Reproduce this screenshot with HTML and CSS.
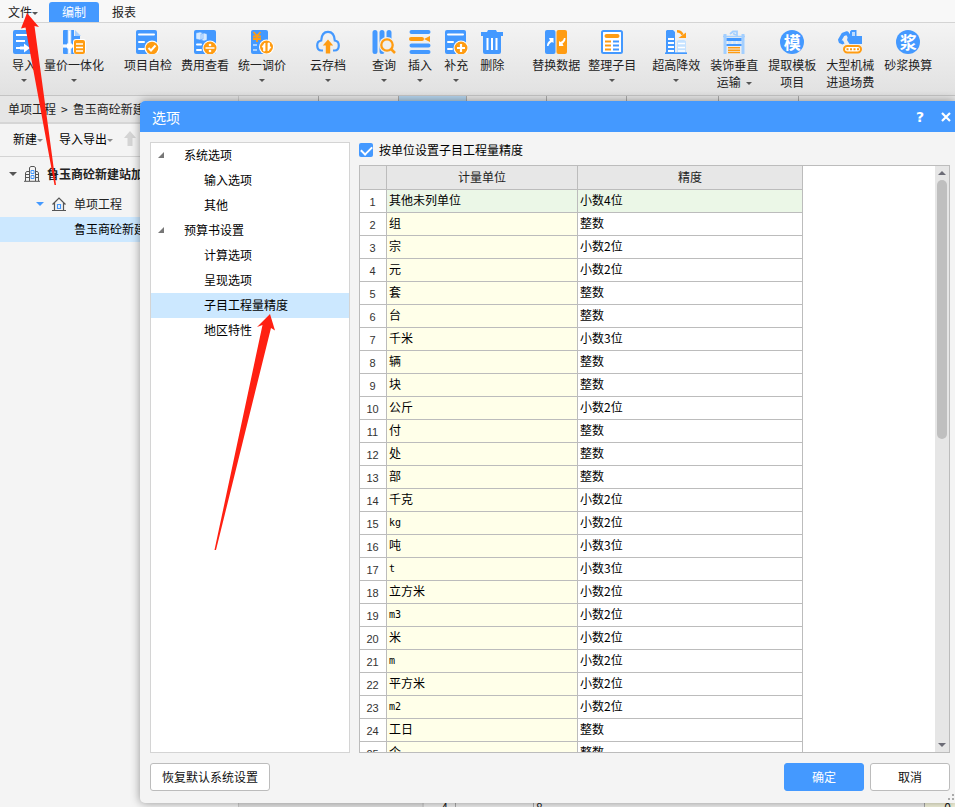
FILE: index.html
```html
<!DOCTYPE html>
<html lang="zh-CN">
<head>
<meta charset="utf-8">
<title>选项</title>
<link rel="stylesheet" href="styles.css">
</head>
<body>
<div class="app">
  <nav class="menubar">
    <button class="menu-file">文件<i class="caret"></i></button>
    <button class="menu-tab active">编制</button>
    <button class="menu-tab">报表</button>
  </nav>

  <div class="ribbon">
    <div class="group">
      <button class="tool"><svg class="icon" viewBox="0 0 24 24"><rect x="1" width="22" height="24" rx="2" fill="#4499ff"/><path d="M4 5h15M4 11h9M4 18h6" stroke="#fff" stroke-width="2"/><path d="M8 16.500h4v-3l6 4.500-6 4.500v-3H8z" fill="#fff"/></svg><span>导入</span><i class="caret"></i></button>
      <button class="tool"><svg class="icon" viewBox="0 0 24 24"><path d="M2 0h10v6h6v18H2a1 1 0 0 1-1-1V1a1 1 0 0 1 1-1z" fill="#4499ff"/><path d="M7.500 0v24M1 16h11" stroke="#d5e9ff" stroke-width="3.500"/><path d="M7.500 1v22M1 16h10" stroke="#fff" stroke-width="1.500"/><path d="M5 13.500h5v5H5z" fill="#fff"/><path d="M13 0l6 6h-6z" fill="#a9d1ff"/><rect x="11" y="9" width="13" height="15" rx="3" fill="#fff"/><rect x="12" y="10" width="11" height="14" rx="2" fill="#ff9c12"/><path d="M14 14h7M14 17.500h7M14 21h7" stroke="#fff" stroke-width="1.500"/></svg><span>量价一体化</span><i class="caret"></i></button>
    </div>
    <div class="group group-check">
      <button class="tool"><svg class="icon" viewBox="0 0 24 24"><rect x="0" width="21" height="24" rx="2" fill="#4499ff"/><path d="M3 4.500h15M3 12h5M3 19h5" stroke="#fff" stroke-width="2" stroke-linecap="round"/><circle cx="16" cy="18" r="7.500" fill="#fff"/><circle cx="16" cy="18" r="6.300" fill="#ff9c12"/><path d="M12.500 18l2.500 2.500 4.500-5" stroke="#fff" stroke-width="2" fill="none"/></svg><span>项目自检</span></button>
      <button class="tool"><svg class="icon" viewBox="0 0 24 24"><rect x="1" width="22" height="24" rx="2" fill="#4499ff"/><path d="M3 3l4-1 3 1v6l-3 1-4-1zM8 4l3-1 3 1v6l-3 1-3-1z" fill="#d5e9ff" stroke="#4499ff" stroke-width=".5"/><path d="M4 14.500h4M4 20h4" stroke="#fff" stroke-width="2" stroke-linecap="round"/><circle cx="17" cy="18" r="7.500" fill="#fff"/><circle cx="17" cy="18" r="6.500" fill="#ff9c12"/><path d="M12.500 18h9" stroke="#fff" stroke-width="1.500"/><circle cx="17" cy="15" r="1.300" fill="#fff"/><circle cx="17" cy="21" r="1.300" fill="#fff"/></svg><span>费用查看</span></button>
      <button class="tool"><svg class="icon" viewBox="0 0 24 24"><rect x="1" width="17" height="24" rx="2" fill="#4499ff"/><path d="M3.500 2L7 6l3.500-4M3 6.500h8M3 9h8M7 6v6" stroke="#ff9c12" stroke-width="1.800" fill="none"/><path d="M3 15h4M3 20h4" stroke="#a9d1ff" stroke-width="2"/><circle cx="16.500" cy="17" r="7.500" fill="#fff"/><circle cx="16.500" cy="17" r="6.500" fill="#ff9c12"/><path d="M15 13v8h-1.500v-4H12zM18 21v-8h1.500v4H21z" fill="#fff" stroke="#fff" stroke-width=".8"/></svg><span>统一调价</span><i class="caret"></i></button>
    </div>
    <div class="group group-cloud">
      <button class="tool"><svg class="icon" viewBox="0 0 24 24"><path d="M7 20.500H5.500C2.500 20.500 1.200 18 1.200 15.500c0-3 1.800-4.700 4-5C5.500 5 8 1.800 12 1.800s6.500 3.200 6.800 8.700c2.200.3 4 2 4 5 0 2.500-1.300 5-4.300 5H17" fill="none" stroke="#4499ff" stroke-width="2.200"/><path d="M12 9.500l5.200 6h-3v8H9.800v-8h-3z" fill="#ff9c12"/></svg><span>云存档</span><i class="caret"></i></button>
    </div>
    <div class="group group-edit">
      <button class="tool"><svg class="icon" viewBox="0 0 24 24"><path d="M3 2.500v19M10 2.500v19M17 2.500v8" stroke="#4499ff" stroke-width="5" stroke-linecap="round"/><circle cx="15" cy="15" r="8" fill="#eee"/><circle cx="15" cy="15" r="5.700" fill="none" stroke="#ff9c12" stroke-width="2.300"/><path d="M19 19l4 4" stroke="#ff9c12" stroke-width="2.500"/></svg><span>查询</span><i class="caret"></i></button>
      <button class="tool"><svg class="icon" viewBox="0 0 24 24"><path d="M3.500 2h17M3.500 15.500h17M3.500 22h17" stroke="#4499ff" stroke-width="4" stroke-linecap="round"/><path d="M3 9h11" stroke="#ff9c12" stroke-width="4" stroke-linecap="round"/><path d="M22 6v6l-6-3z" fill="#ff9c12"/></svg><span>插入</span><i class="caret"></i></button>
      <button class="tool"><svg class="icon" viewBox="0 0 24 24"><rect x="1" width="21" height="24" rx="2" fill="#4499ff"/><path d="M4 4.500h15M4 12h5M4 19h4" stroke="#fff" stroke-width="2" stroke-linecap="round"/><circle cx="17" cy="18" r="7.500" fill="#fff"/><circle cx="17" cy="18" r="6.500" fill="#ff9c12"/><path d="M17 14v8M13 18h8" stroke="#fff" stroke-width="2.200"/></svg><span>补充</span><i class="caret"></i></button>
      <button class="tool"><svg class="icon" viewBox="0 0 24 24"><path d="M1 2h6l1-2h8l1 2h6v4h-2v16a2 2 0 0 1-2 2H5a2 2 0 0 1-2-2V6H1z" fill="#4499ff"/><path d="M7.500 8v12M12 8v12M16.500 8v12" stroke="#fff" stroke-width="2"/></svg><span>删除</span></button>
    </div>
    <div class="group group-data">
      <button class="tool"><svg class="icon" viewBox="0 0 24 24"><rect x="1" width="10.500" height="24" rx="2" fill="#4499ff"/><rect x="12.500" width="10.500" height="24" rx="2" fill="#ff9c12"/><path d="M3 16c0-3 1-4 3-5.500L5 8h4.500v5L8 12c-2 1-3 2-3.500 4z" fill="#fff"/><path d="M21.500 8c0 3-1 4-3 5.500l1 2.500H15v-5l1.500 1c2-1 3-2 3.500-4z" fill="#fff"/></svg><span>替换数据</span></button>
      <button class="tool"><svg class="icon" viewBox="0 0 24 24"><rect x="2" y="1" width="20" height="22" rx="1.500" fill="#fff" stroke="#4499ff" stroke-width="2"/><path d="M6.500 6h11" stroke="#ff9c12" stroke-width="4" stroke-linecap="round"/><path d="M5 11.500h6M5 15.500h6M5 19.500h6" stroke="#ff9c12" stroke-width="2"/><path d="M13 11.500h6M13 15.500h6M13 19.500h6" stroke="#4499ff" stroke-width="2"/></svg><span>整理子目</span><i class="caret"></i></button>
    </div>
    <div class="group group-project">
      <button class="tool"><svg class="icon" viewBox="0 0 24 24"><path d="M3 0h6l2 2v22H2V1z" fill="#4499ff"/><path d="M4 9h6M4 13h6M4 17h6M4 21h6" stroke="#fff" stroke-width="2"/><path d="M13 11l2-1h5l2 1v12h-9z" fill="#c5e2ff"/><path d="M14 13.500h7M14 17.500h7M14 21h7" stroke="#fff" stroke-width="1.500"/><path d="M1 23.200h22" stroke="#4499ff" stroke-width="1.600"/><path d="M13 1.200c3 0 4.500 1 5.500 3.500" fill="none" stroke="#ff9c12" stroke-width="2.400"/><path d="M14.500 8H22V2.500z" fill="#ff9c12"/></svg><span>超高降效</span><i class="caret"></i></button>
      <button class="tool"><svg class="icon" viewBox="0 0 24 24"><path d="M3 4v20M21 4v20" stroke="#a3cfff" stroke-width="3"/><path d="M8 4l3-2.500h4V6M11 3.500l3 1.500" fill="none" stroke="#a3cfff" stroke-width="1.800"/><path d="M1 6.500h22" stroke="#a3cfff" stroke-width="1.500"/><path d="M4.500 8h15v3h-15zM4.500 14h15v2h-15z" fill="#4499ff"/><path d="M6 11h3.500v3H6zM11 11h3v3h-3zM15.500 11H19v3h-3.500z" fill="#cfe6ff"/><path d="M6 17.800h12M6 20.200h12M6 22.600h12" stroke="#ff9c12" stroke-width="1.500"/></svg><span>装饰垂直</span><span>运输<i class="caret caret-inline"></i></span></button>
      <button class="tool"><b class="icon badge">模</b><span>提取模板</span><span>项目</span></button>
      <button class="tool"><svg class="icon" viewBox="0 0 24 24"><path d="M1.500 10.500L5 4.500l4-1.500 4 6" fill="none" stroke="#4499ff" stroke-width="3.500" stroke-linejoin="round"/><path d="M0 10l5 .5 1.500 3-2 1L1 13z" fill="#4499ff"/><path d="M10 6h2V1.500L13.500 0h5v6H24v8H11.500L9 10z" fill="#4499ff"/><path d="M14 2h3v4h-3z" fill="#bddcff"/><rect x="6" y="16" width="17" height="6.500" rx="3.200" fill="#fff" stroke="#ff9c12" stroke-width="2"/><path d="M8.500 19.300h12.500" stroke="#ff9c12" stroke-width="2" stroke-dasharray="2 1.500"/></svg><span>大型机械</span><span>进退场费</span></button>
      <button class="tool"><b class="icon badge">浆</b><span>砂浆换算</span></button>
    </div>
  </div>

  <div class="workspace">
    <aside class="sidebar">
      <div class="crumbs">单项工程<span class="sep">&gt;</span>鲁玉商砼新建</div>
      <div class="side-tools">
        <button>新建<i class="caret"></i></button>
        <button>导入导出<i class="caret"></i></button>
        <svg class="up" viewBox="0 0 12 16"><path d="M6 0l6 7H8.500v8h-5V7H0z" fill="#d4d4d4"/></svg>
      </div>
      <div class="project-tree">
        <div class="node root"><i class="twist"></i><svg class="node-icon" viewBox="0 0 16 16"><path d="M5.500 15V1.500L7 .5h3l1.500 1V15M5.500 5.500h-3L1.500 7v8M11.500 5.500h2l1 1.500v8M0 15.300h16M2 8.500h3M2 11.500h3M12 8.500h2M12 11.500h2" fill="none" stroke="#555"/><path d="M7 4.500h3v3H7zM7 9.500h3v3H7z" fill="none" stroke="#4499ff"/></svg><b>鲁玉商砼新建站加</b></div>
        <div class="node child"><i class="twist blue"></i><svg class="node-icon" viewBox="0 0 16 16"><path d="M1.500 8.500L8 2l6.500 6.500M3.500 7v7.500h9V7M1 14.500h14" fill="none" stroke="#555" stroke-width="1.200"/><path d="M6.500 8.500h3v4h-3z" fill="none" stroke="#4499ff" stroke-width="1.200"/></svg><span>单项工程</span></div>
        <div class="node leaf">鲁玉商砼新建</div>
      </div>
    </aside>
    <main class="sheet">
      <div class="sheet-tabs"><i></i><i></i><i class="current"></i><i></i><i></i><i class="wide"></i><i></i></div>
      <div class="sheet-foot"><i class="foot-gap"></i><span class="foot-num">4</span><span class="foot-cell"></span><span class="foot-rest">8</span><span class="foot-end">0</span></div>
    </main>
  </div>

  <section class="dialog" role="dialog" aria-labelledby="dialog-title">
    <header class="titlebar">
      <h1 id="dialog-title">选项</h1>
      <button class="help" aria-label="帮助">?</button>
      <button aria-label="关闭"><svg class="close" viewBox="0 0 10 10"><path d="M1 1l8 8M9 1L1 9" stroke="#fff" stroke-width="2.200"/></svg></button>
    </header>
    <div class="dialog-body">
      <ul class="options">
        <li class="parent"><i></i>系统选项</li>
        <li>输入选项</li>
        <li>其他</li>
        <li class="parent"><i></i>预算书设置</li>
        <li>计算选项</li>
        <li>呈现选项</li>
        <li class="selected">子目工程量精度</li>
        <li>地区特性</li>
      </ul>
      <div class="settings">
        <label class="check"><input type="checkbox" checked>按单位设置子目工程量精度</label>
        <div class="grid">
          <div class="grid-view">
            <table>
              <colgroup><col class="c-num"><col class="c-unit"><col class="c-prec"></colgroup>
              <thead><tr><th></th><th>计量单位</th><th>精度</th></tr></thead>
              <tbody>
                <tr class="current"><td>1</td><td>其他未列单位</td><td>小数4位</td></tr>
                <tr><td>2</td><td>组</td><td>整数</td></tr>
                <tr><td>3</td><td>宗</td><td>小数2位</td></tr>
                <tr><td>4</td><td>元</td><td>小数2位</td></tr>
                <tr><td>5</td><td>套</td><td>整数</td></tr>
                <tr><td>6</td><td>台</td><td>整数</td></tr>
                <tr><td>7</td><td>千米</td><td>小数3位</td></tr>
                <tr><td>8</td><td>辆</td><td>整数</td></tr>
                <tr><td>9</td><td>块</td><td>整数</td></tr>
                <tr><td>10</td><td>公斤</td><td>小数2位</td></tr>
                <tr><td>11</td><td>付</td><td>整数</td></tr>
                <tr><td>12</td><td>处</td><td>整数</td></tr>
                <tr><td>13</td><td>部</td><td>整数</td></tr>
                <tr><td>14</td><td>千克</td><td>小数2位</td></tr>
                <tr><td>15</td><td class="latin">kg</td><td>小数2位</td></tr>
                <tr><td>16</td><td>吨</td><td>小数3位</td></tr>
                <tr><td>17</td><td class="latin">t</td><td>小数3位</td></tr>
                <tr><td>18</td><td>立方米</td><td>小数2位</td></tr>
                <tr><td>19</td><td class="latin">m3</td><td>小数2位</td></tr>
                <tr><td>20</td><td>米</td><td>小数2位</td></tr>
                <tr><td>21</td><td class="latin">m</td><td>小数2位</td></tr>
                <tr><td>22</td><td>平方米</td><td>小数2位</td></tr>
                <tr><td>23</td><td class="latin">m2</td><td>小数2位</td></tr>
                <tr><td>24</td><td>工日</td><td>整数</td></tr>
                <tr><td>25</td><td>个</td><td>整数</td></tr>
              </tbody>
            </table>
          </div>
          <div class="scroll"><i class="arrow-up"></i><div class="thumb"></div><i class="arrow-down"></i></div>
        </div>
      </div>
    </div>
    <footer class="actions">
      <button class="btn reset">恢复默认系统设置</button>
      <button class="btn primary">确定</button>
      <button class="btn">取消</button>
    </footer>
    <svg class="grip" viewBox="0 0 6 6"><path d="M4 0h2v2H4zM0 4h2v2H0zM4 4h2v2H4z" fill="#aaa"/></svg>
  </section>

  <svg class="marks" width="300" height="560" viewBox="0 0 300 560" aria-hidden="true">
    <path d="M27 13L39 27 34.500 26 56 185H54.500L25.500 27.500 21 28.500zM270 314L275 330.500 271 328 216 550 214.500 550 262.500 325 257 327z" fill="#ff2012"/>
  </svg>
</div>
</body>
</html>
```
FILE: styles.css
```css
* { box-sizing: border-box; }
body {
  margin: 0;
  font: 12px/16px "Noto Sans CJK SC", sans-serif;
  color: #222;
  background: #f4f4f4;
}
button {
  font: inherit;
  color: inherit;
  background: none;
  border: 0;
  padding: 0;
  white-space: nowrap;
}
.app {
  position: relative;
  display: flex;
  flex-direction: column;
  height: 100vh;
  overflow: hidden;
}
.caret {
  display: inline-block;
  border: 3px solid transparent;
  border-top-color: #555;
  border-bottom: 0;
  vertical-align: middle;
}

/* Menu bar */
.menubar {
  display: flex;
  align-items: flex-end;
  height: 23px;
  background: #f8f8f8;
  border-bottom: 1px solid #d4d4d4;
}
.menu-file { width: 49px; height: 20px; padding-left: 8px; text-align: left; }
.menu-tab { width: 50px; height: 20px; border-radius: 3px 3px 0 0; }
.menu-tab.active { background: #4499ff; color: #fff; }

/* Ribbon */
.ribbon {
  display: flex;
  height: 73px;
  padding: 7px 0 0 12px;
  background: linear-gradient(#f4f4f4, #e1e1e1);
  border-bottom: 1px solid #c4c4c4;
}
.group { display: flex; gap: 8px; }
.group-check { margin-left: 20px; gap: 9px; }
.group-cloud { margin-left: 24px; }
.group-edit { margin-left: 26px; gap: 12px; }
.group-data { margin-left: 28px; }
.group-project { margin-left: 16px; gap: 10px; }
.tool { display: flex; flex-direction: column; align-items: center; }
.tool span { line-height: 17px; }
.tool .icon { width: 24px; height: 24px; margin-bottom: 2px; }
.tool > .caret { margin-top: 6px; }
.caret-inline { margin-left: 5px; }
.badge {
  border-radius: 50%;
  background: #4499ff;
  color: #fff;
  font-size: 17px;
  line-height: 23px;
  text-align: center;
}

/* Project sidebar */
.workspace { display: flex; flex: 1; min-height: 0; }
.sidebar { width: 239px; border-right: 1px solid #ccc; overflow: hidden; white-space: nowrap; }
.crumbs {
  height: 28px;
  padding-left: 8px;
  line-height: 26px;
  background: #e6e6e6;
  border-bottom: 2px solid #d6d6d6;
}
.sep { margin: 0 5px; }
.side-tools {
  display: flex;
  align-items: center;
  gap: 16px;
  height: 33px;
  padding: 0 0 2px 13px;
  border-bottom: 1px solid #d4d4d4;
}
.side-tools button { color: #000; }
.side-tools .caret { border-top-color: #888; }
.up { width: 12px; height: 16px; margin-left: -5px; }
.node { display: flex; align-items: center; }
.node-icon { width: 16px; height: 16px; }
.root { height: 34px; padding-left: 9px; gap: 7px; }
.child { height: 26px; padding-left: 36px; gap: 7px; }
.leaf { height: 25px; padding: 0 0 2px 74px; background: #cce8ff; color: #000; }
.twist { border: 4px solid transparent; border-top-color: #555; border-bottom: 0; }
.twist.blue { border-top-color: #4499ff; }

/* Sheet behind the dialog */
.sheet { display: flex; flex: 1; flex-direction: column; justify-content: space-between; overflow: hidden; }
.sheet-tabs { display: flex; height: 24px; background: #e6e6e6; }
.sheet-tabs i { width: 80px; border-right: 1px solid #aaa; }
.sheet-tabs .current { width: 68px; background: #b4d3ec; }
.sheet-tabs .wide { width: 92px; }
.sheet-foot { display: flex; height: 6px; line-height: 12px; overflow: hidden; background: #f0f0f0; }
.foot-gap { width: 185px; background: #e4e4e4; border-right: 2px solid #d4d4d4; }
.foot-num { width: 32px; padding-left: 10px; border-right: 1px solid #aaa; text-align: center; }
.foot-cell { width: 78px; border-right: 1px solid #aaa; }
.foot-rest { flex: 1; padding-left: 2px; border-right: 1px solid #aaa; }
.foot-end { width: 30px; padding-right: 4px; text-align: right; background: #f5f5dc; }

/* Options dialog */
.dialog {
  position: absolute;
  inset: 101px 0 4px 140px;
  display: flex;
  flex-direction: column;
  background: #f4f4f4;
  border-radius: 5px 0 0 5px;
  box-shadow: 0 0 10px rgba(0, 0, 0, .4);
}
.titlebar {
  display: flex;
  align-items: center;
  height: 31px;
  padding: 0 4px 0 12px;
  color: #fff;
  background: #4499ff;
  border-radius: 5px 0 0 0;
}
.titlebar h1 { flex: 1; margin: 0; font-size: 14px; font-weight: 400; line-height: 20px; }
.titlebar button { margin-left: 17px; }
.titlebar .help { font: 700 14px/16px "DejaVu Sans", sans-serif; }
.close { display: block; width: 10px; height: 10px; }
.dialog-body { display: flex; flex: 1; gap: 9px; min-height: 0; padding: 10px 5px 0 10px; }
.options {
  width: 200px;
  margin: 0;
  padding: 0;
  list-style: none;
  color: #000;
  background: #fff;
  border: 1px solid #d4d4d4;
}
.options li { height: 25px; padding-left: 53px; line-height: 23px; }
.options .parent { display: flex; align-items: center; gap: 20px; padding: 0 0 2px 7px; }
.options i { border: 3px solid #777; border-top-color: transparent; border-left-color: transparent; }
.options .selected { background: #cce8ff; }
.settings { display: flex; flex: 1; flex-direction: column; min-width: 0; }
.check { display: flex; align-items: center; gap: 6px; height: 16px; margin-bottom: 7px; color: #000; }
.check input {
  appearance: none;
  width: 14px;
  height: 14px;
  margin: 0;
  border-radius: 2px;
  background: #4499ff;
  display: grid;
  place-items: center;
}
.check input::before {
  content: "";
  width: 9px;
  height: 5px;
  border: solid #fff;
  border-width: 0 0 2px 2px;
  transform: translateY(-1px) rotate(-45deg);
}
.grid { display: flex; flex: 1; min-height: 0; background: #fff; border: 1px solid #bcbcbc; }
.grid-view { flex: 1; overflow: hidden; }
table { border-collapse: separate; border-spacing: 0; table-layout: fixed; width: 443px; color: #000; }
.c-num { width: 27px; }
.c-unit { width: 191px; }
.c-prec { width: 225px; }
th, td { padding: 0; border: solid #bcbcbc; border-width: 0 1px 1px 0; }
th { height: 24px; padding-bottom: 2px; font-weight: 400; color: #222; background: #e7e7e7; line-height: 20px; }
td { height: 23px; padding: 0 0 2px 2px; line-height: 20px; }
td:first-child { padding: 2px 1px 0 0; font: 11px/18px "Liberation Sans", sans-serif; color: #333; text-align: center; }
td:nth-child(2) { background: #ffffe9; }
.current td:nth-child(n+2) { background: #ebf7e7; }
td.latin { padding-bottom: 0; font-family: "DejaVu Sans Mono", monospace; font-size: 10px; }
.scroll { display: flex; flex-direction: column; align-items: center; width: 14px; padding: 5px 0; background: #e6e6e6; }
.arrow-up, .arrow-down { border: 4px solid transparent; }
.arrow-up { border-top: 0; border-bottom-color: #6c6c76; }
.arrow-down { margin-top: auto; border-bottom: 0; border-top-color: #6c6c76; }
.thumb { width: 10px; height: 45%; margin-top: 5px; border-radius: 5px; background: #bfbfbf; }
.actions { display: flex; gap: 6px; padding: 10px 5px 12px 10px; }
.btn {
  width: 80px;
  height: 28px;
  color: #111;
  background: #fff;
  border: 1px solid #bcbcbc;
  border-radius: 3px;
}
.reset { width: 120px; margin-right: auto; }
.primary { color: #fff; background: #4499ff; border-color: #4499ff; }
.grip { position: absolute; right: 1px; bottom: 3px; width: 6px; height: 6px; }

/* Red pointer arrows drawn over the window */
.marks { position: absolute; top: 0; left: 0; pointer-events: none; }
```
